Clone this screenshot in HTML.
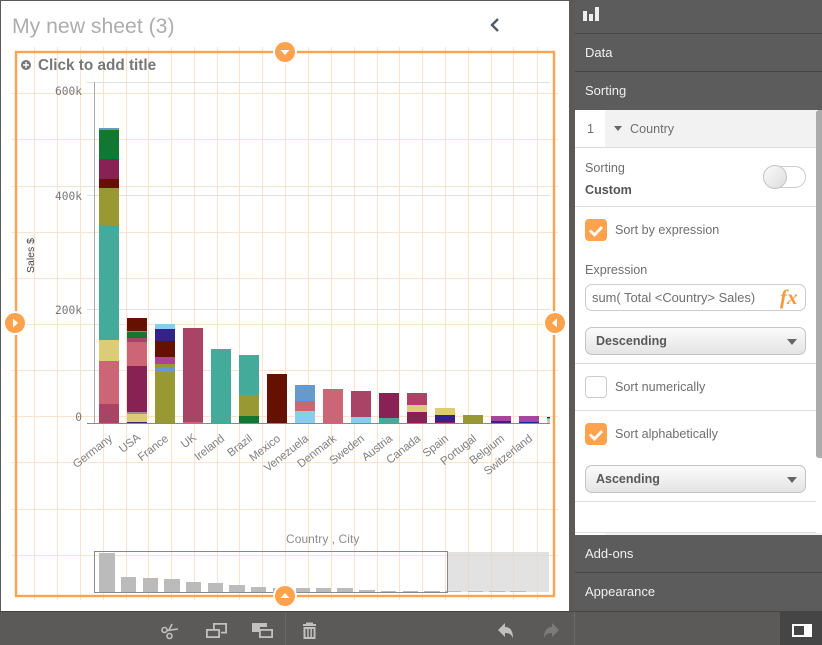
<!DOCTYPE html>
<html><head><meta charset="utf-8"><style>
html,body{margin:0;padding:0;background:#5b5a58}
body{width:822px;height:645px;overflow:hidden;position:relative;font-family:"Liberation Sans",sans-serif}
.a{position:absolute}
.h{position:absolute;left:575px;width:247px;background:#5c5c5c;color:#f0f0f0;font-size:13px;box-sizing:border-box;padding-left:10px;border-bottom:1px solid #474744}
.t{position:absolute;font-size:12.6px;color:#6f6f6f;white-space:nowrap;line-height:16px}
.l{position:absolute;left:575px;width:241px;height:1px;background:#dcdcdc}
.cb{position:absolute;left:585px;width:22px;height:22px;border-radius:4px;background:#ffa24d}
.dd{position:absolute;left:585px;width:221px;height:28px;box-sizing:border-box;border:1px solid #c4c4c4;border-radius:7px;background:linear-gradient(#fbfbfb,#e4e4e4);font-weight:bold;font-size:12.5px;color:#595959;line-height:27px;padding-left:10px}
.dd i{position:absolute;right:8px;top:11px;width:0;height:0;border:5px solid transparent;border-top:6px solid #666;border-bottom:0}
</style></head><body>
<div class="a" style="left:1px;top:1px;width:568px;height:610px;background:#fff"></div>

<svg class="a" style="left:0;top:0" width="570" height="612" viewBox="0 0 570 612">
<g stroke="#fde3cb" stroke-width="1" shape-rendering="crispEdges">
<path d="M34.5 47V600M57.5 47V600M80.5 47V600M103.5 47V600M126.5 47V600M148.5 47V600M171.5 47V600M194.500 47V600M217.500 47V600M239.500 47V600M262.500 47V600M285.500 47V600M308.500 47V600M331.500 47V600M354.500 47V600M377.500 47V600M399.500 47V600M422.500 47V600M445.500 47V600M468.500 47V600M491.500 47V600M513.500 47V600M537.500 47V600"/>
<path d="M11 93.500H558M11 139.500H558M11 186.500H558M11 232.500H558M11 278.500H558M11 324.500H558M11 370.500H558M11 416.500H558M11 462.500H558M11 509.500H558M11 555.500H558"/>
</g>
<g stroke="#e0e0e0" shape-rendering="crispEdges"><path d="M87 82.500H550M87 195.500H550M87 309.500H550"/></g>
<path d="M94.500 82V423" stroke="#aaa" fill="none" shape-rendering="crispEdges"/>

<g shape-rendering="crispEdges">
<rect x="99" y="128" width="20" height="2" fill="#6699cc"/><rect x="99" y="130" width="20" height="29" fill="#117733"/><rect x="99" y="159" width="20" height="20" fill="#882255"/><rect x="99" y="179" width="20" height="9" fill="#661100"/><rect x="99" y="188" width="20" height="37" fill="#999933"/><rect x="99" y="225" width="20" height="115" fill="#44aa99"/><rect x="99" y="340" width="20" height="21" fill="#ddcc77"/><rect x="99" y="361" width="20" height="43" fill="#cc6677"/><rect x="99" y="404" width="20" height="19" fill="#aa4466"/>
<rect x="127" y="318" width="20" height="13" fill="#661100"/><rect x="127" y="331" width="20" height="1" fill="#44aa99"/><rect x="127" y="332" width="20" height="6" fill="#117733"/><rect x="127" y="338" width="20" height="4" fill="#aa4466"/><rect x="127" y="342" width="20" height="24" fill="#cc6677"/><rect x="127" y="366" width="20" height="46" fill="#882255"/><rect x="127" y="412" width="20" height="2" fill="#aa8899"/><rect x="127" y="414" width="20" height="8" fill="#ddcc77"/><rect x="127" y="422" width="20" height="1" fill="#332288"/>
<rect x="155" y="324" width="20" height="5" fill="#88ccee"/><rect x="155" y="329" width="20" height="12" fill="#332288"/><rect x="155" y="341" width="20" height="16" fill="#661100"/><rect x="155" y="357" width="20" height="7" fill="#aa4499"/><rect x="155" y="364" width="20" height="3" fill="#999933"/><rect x="155" y="367" width="20" height="5" fill="#6699cc"/><rect x="155" y="372" width="20" height="51" fill="#999933"/>
<rect x="183" y="328" width="20" height="94" fill="#aa4466"/><rect x="183" y="422" width="20" height="1" fill="#cc6677"/>
<rect x="211" y="349" width="20" height="74" fill="#44aa99"/>
<rect x="239" y="355" width="20" height="40" fill="#44aa99"/><rect x="239" y="395" width="20" height="21" fill="#999933"/><rect x="239" y="416" width="20" height="7" fill="#117733"/>
<rect x="267" y="374" width="20" height="49" fill="#661100"/>
<rect x="295" y="385" width="20" height="16" fill="#6699cc"/><rect x="295" y="401" width="20" height="10" fill="#cc6677"/><rect x="295" y="411" width="20" height="12" fill="#88ccee"/>
<rect x="323" y="389" width="20" height="34" fill="#cc6677"/>
<rect x="351" y="391" width="20" height="26" fill="#aa4466"/><rect x="351" y="417" width="20" height="6" fill="#88ccee"/>
<rect x="379" y="393" width="20" height="25" fill="#882255"/><rect x="379" y="418" width="20" height="5" fill="#44aa99"/>
<rect x="407" y="393" width="20" height="12" fill="#aa4466"/><rect x="407" y="405" width="20" height="7" fill="#ddcc77"/><rect x="407" y="412" width="20" height="11" fill="#882255"/>
<rect x="435" y="408" width="20" height="7" fill="#ddcc77"/><rect x="435" y="415" width="20" height="7" fill="#332288"/><rect x="435" y="422" width="20" height="1" fill="#882255"/>
<rect x="463" y="415" width="20" height="8" fill="#999933"/>
<rect x="491" y="416" width="20" height="5" fill="#aa4499"/><rect x="491" y="421" width="20" height="2" fill="#332288"/>
<rect x="519" y="416" width="20" height="7" fill="#aa4499"/><rect x="519" y="422" width="20" height="1" fill="#332288"/>
<rect x="547" y="417" width="3" height="1" fill="#661100"/><rect x="547" y="418" width="3" height="1" fill="#6699cc"/><rect x="547" y="419" width="3" height="4" fill="#ddcc77"/>
<path d="M87 423.500H550" stroke="#888"/>
</g>

<g font-family="'DejaVu Sans Mono',monospace" font-size="11.2" fill="#777" text-anchor="end">
<text x="82" y="95">600k</text><text x="82" y="200">400k</text><text x="82" y="314">200k</text><text x="82" y="421">0</text>
</g>
<text transform="translate(34,273) rotate(-90)" font-size="10.500" fill="#444">Sales $</text>

<g font-size="11.5" fill="#808080" text-anchor="end" letter-spacing="-.15">
<text transform="translate(113,440) rotate(-38)">Germany</text>
<text transform="translate(141,439) rotate(-38)">USA</text>
<text transform="translate(169,440) rotate(-38)">France</text>
<text transform="translate(197,439) rotate(-38)">UK</text>
<text transform="translate(225,440) rotate(-38)">Ireland</text>
<text transform="translate(253,440) rotate(-38)">Brazil</text>
<text transform="translate(281,440) rotate(-38)">Mexico</text>
<text transform="translate(309,440) rotate(-38)">Venezuela</text>
<text transform="translate(337,440) rotate(-38)">Denmark</text>
<text transform="translate(365,440) rotate(-38)">Sweden</text>
<text transform="translate(393,440) rotate(-38)">Austria</text>
<text transform="translate(421,440) rotate(-38)">Canada</text>
<text transform="translate(449,440) rotate(-38)">Spain</text>
<text transform="translate(477,440) rotate(-38)">Portugal</text>
<text transform="translate(505,440) rotate(-38)">Belgium</text>
<text transform="translate(533,440) rotate(-38)">Switzerland</text>
</g>
<text x="286" y="543" font-size="12" fill="#8d8d8d" letter-spacing=".05">Country , City</text>

<rect x="447" y="552" width="102" height="40" fill="#d8d8d8" fill-opacity=".75"/>
<g fill="#bbb" shape-rendering="crispEdges">
<rect x="99" y="553" width="16" height="39"/><rect x="121" y="577" width="15" height="15"/><rect x="143" y="578" width="15" height="14"/><rect x="164" y="579" width="16" height="13"/><rect x="186" y="582" width="15" height="10"/><rect x="208" y="583" width="15" height="9"/><rect x="229" y="585" width="16" height="7"/><rect x="251" y="587" width="15" height="5"/><rect x="273" y="588" width="15" height="4"/><rect x="296" y="588" width="14" height="4"/><rect x="316" y="588" width="15" height="4"/><rect x="337" y="588" width="16" height="4"/><rect x="359" y="590" width="16" height="2"/><rect x="381" y="591" width="15" height="1"/><rect x="403" y="591" width="15" height="1"/><rect x="424" y="591" width="16" height="1"/><rect x="445" y="591" width="16" height="1"/><rect x="468" y="591" width="15" height="1"/><rect x="489" y="591" width="16" height="1"/><rect x="510" y="591" width="16" height="1"/>
</g>
<rect x="94.500" y="551.500" width="353" height="41" fill="none" stroke="#888" shape-rendering="crispEdges"/>

<rect x="16" y="52" width="538" height="544" fill="none" stroke="#ffa24d" stroke-width="2.400"/>
<g>
<circle cx="285" cy="52" r="12" fill="#fff"/><circle cx="285" cy="52" r="10" fill="#ffa24d"/><path d="M280.500 50h9l-4.500 5z" fill="#fff"/>
<circle cx="285" cy="596" r="12" fill="#fff"/><circle cx="285" cy="596" r="10" fill="#ffa24d"/><path d="M280.500 598h9l-4.500-5z" fill="#fff"/>
<circle cx="15" cy="323" r="12" fill="#fff"/><circle cx="15" cy="323" r="10" fill="#ffa24d"/><path d="M13 318.500v9l5-4.500z" fill="#fff"/>
<circle cx="555" cy="323" r="12" fill="#fff"/><circle cx="555" cy="323" r="10" fill="#ffa24d"/><path d="M557 318.500v9l-5-4.500z" fill="#fff"/>
</g>

<text x="12" y="33" font-size="21.200" fill="#adadad">My new sheet (3)</text>
<path d="M498 19l-6 6 6 6" fill="none" stroke="#4f5a66" stroke-width="2.400"/>
<circle cx="26" cy="65" r="5" fill="#777"/><path d="M23 65h6M26 62v6" stroke="#fff" stroke-width="1.400"/>
<text x="38" y="70" font-size="15.300" font-weight="bold" fill="#777">Click to add title</text>
</svg>

<div class="a" style="left:575px;top:110px;width:247px;height:425px;background:#fff"></div>
<div class="a" style="left:605px;top:110px;width:211px;height:37px;background:#f2f2f2"></div>
<div class="a" style="left:816px;top:110px;width:6px;height:348px;background:#ababab;border-radius:3px 0 0 3px"></div>
<div class="h" style="top:0;height:34px"></div>
<div class="h" style="top:34px;height:38px;line-height:37px">Data</div>
<div class="h" style="top:72px;height:38px;line-height:37px;border-bottom:0">Sorting</div>
<svg class="a" style="left:583px;top:7px" width="18" height="15"><path d="M0 4h4v10H0zM6 7h4v7H6zM12 0h4v14h-4z" fill="#eee"/></svg>

<div class="t" style="left:587px;top:121px">1</div>
<div class="a" style="left:614px;top:126px;width:0;height:0;border:4.500px solid transparent;border-top:5px solid #666;border-bottom:0"></div>
<div class="t" style="left:630px;top:121px">Country</div>
<div class="l" style="top:147px"></div>
<div class="t" style="left:585px;top:160px">Sorting</div>
<div class="t" style="left:585px;top:182px;font-weight:bold;color:#555">Custom</div>
<div class="a" style="left:763px;top:166px;width:43px;height:22px;box-sizing:border-box;border:1px solid #ccc;border-radius:11px;background:#fff"></div>
<div class="a" style="left:763px;top:165px;width:24px;height:24px;box-sizing:border-box;border:1px solid #c4c4c4;border-radius:50%;background:linear-gradient(135deg,#fafafa,#ddd)"></div>
<div class="l" style="top:206px"></div>

<div class="cb" style="top:219px"><svg width="22" height="22"><path d="M5 11.500l4.500 4.500L17 8" fill="none" stroke="#fff" stroke-width="2.800"/></svg></div>
<div class="t" style="left:615px;top:222px">Sort by expression</div>
<div class="t" style="left:585px;top:262px">Expression</div>
<div class="a" style="left:585px;top:284px;width:221px;height:27px;box-sizing:border-box;border:1px solid #ccc;border-radius:7px;background:#fff"></div>
<div class="t" style="left:592px;top:290px;font-size:12.9px">sum( Total &lt;Country&gt; Sales)</div>
<div class="a" style="left:780px;top:284px;font:italic bold 21px 'Liberation Serif',serif;color:#f59a3c;line-height:26px">fx</div>
<div class="dd" style="top:327px">Descending<i></i></div>
<div class="l" style="top:363px"></div>
<div class="cb" style="top:376px;background:#fff;box-sizing:border-box;border:1px solid #ccc"></div>
<div class="t" style="left:615px;top:379px">Sort numerically</div>
<div class="l" style="top:410px"></div>
<div class="cb" style="top:423px"><svg width="22" height="22"><path d="M5 11.500l4.500 4.500L17 8" fill="none" stroke="#fff" stroke-width="2.800"/></svg></div>
<div class="t" style="left:615px;top:426px">Sort alphabetically</div>
<div class="dd" style="top:465px">Ascending<i></i></div>
<div class="l" style="top:501px"></div>
<div class="l" style="top:532px"></div>
<div class="a" style="left:605px;top:533px;width:217px;height:2px;background:#f2f2f2"></div>

<div class="h" style="top:535px;height:38px;line-height:37px">Add-ons</div>
<div class="h" style="top:573px;height:39px;line-height:37px">Appearance</div>

<div class="a" style="left:0;top:611px;width:822px;height:34px;background:#5b5a58;border-top:1px solid #454542;box-sizing:border-box"></div>
<div class="a" style="left:285px;top:612px;width:1px;height:33px;background:#6a6966"></div>
<div class="a" style="left:574px;top:612px;width:1px;height:33px;background:#6a6966"></div>
<div class="a" style="left:780px;top:612px;width:42px;height:33px;background:#454545"></div>
<div class="a" style="left:792px;top:624px;width:20px;height:13px;background:#fff"></div>
<div class="a" style="left:794px;top:626px;width:10px;height:9px;background:#454545"></div>

<svg class="a" style="left:150px;top:612px" width="420" height="33" fill="none">
<g stroke="#c0c0c0" stroke-width="1.600">
<circle cx="14.500" cy="18" r="2.500"/><circle cx="19.500" cy="24" r="2.500"/>
<path d="M18.500 19L22 12M17 18.500L28 17"/>
</g>
<g stroke="#c0c0c0" stroke-width="1.800">
<path d="M63.900 17V11.900H76.100V20.600H71"/><rect x="56.900" y="17.900" width="12.200" height="7.200"/>
</g>
<path d="M102 11h15v4h-7v5h-8z" fill="#c0c0c0"/>
<rect x="109.900" y="17.900" width="12.200" height="7.200" stroke="#c0c0c0" stroke-width="1.800"/>
<g fill="#c0c0c0">
<rect x="153" y="12" width="13" height="2"/><rect x="156" y="10.500" width="7" height="2"/>
<path d="M153.500 15h12v12h-12zM155.500 17v8h1.700v-8zM158.700 17v8h1.700v-8zM161.900 17v8h1.700v-8z" fill-rule="evenodd"/>
</g>
<path d="M348 18l7-7v4c6 0 8 5 8 11-2-4-4-5-8-5v4z" fill="#c0c0c0"/>
<path d="M409 18l-7-7v4c-6 0-8 5-8 11 2-4 4-5 8-5v4z" fill="#7c7b79"/>
</svg>
</body></html>
